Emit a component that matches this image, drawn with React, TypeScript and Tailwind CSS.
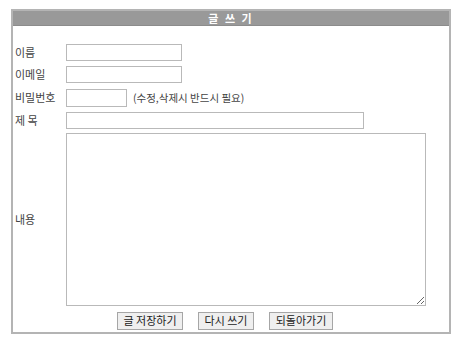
import React from 'react'

const font = { fontFamily: '"Noto Sans CJK KR", "Noto Sans", sans-serif' }

function Row({ label, children, className = '' }: { label: string; children: React.ReactNode; className?: string }) {
  return (
    <div className={`flex items-center ${className}`}>
      <div className="w-[53px] shrink-0 pl-[2px] text-[11px] text-[#444]">{label}</div>
      <div className="flex items-center">{children}</div>
    </div>
  )
}

export default function App() {
  return (
    <div className="bg-white w-[465px] h-[351px] pt-[9px] pl-[11px]" style={font}>
      <div className="w-[440px] h-[325px] border-2 border-[#b4b4b4] flex flex-col">
        <div className="h-[15px] bg-[#999999] border-b border-[#8c8c8c] text-white text-[11px] font-bold leading-[15px] text-center tracking-[2px]">
          글&nbsp;쓰&nbsp;기
        </div>

        <div className="pt-[15px] flex flex-col">
          <Row label="이름" className="h-[22px]">
            <input className="w-[116px] h-[17px] border border-[#b9b9b9] bg-white outline-none" />
          </Row>
          <Row label="이메일" className="h-[23px]">
            <input className="w-[116px] h-[17px] border border-[#b9b9b9] bg-white outline-none" />
          </Row>
          <Row label="비밀번호" className="h-[23px]">
            <input className="w-[61px] h-[18px] border border-[#b9b9b9] bg-white outline-none" />
            <span className="ml-[6px] text-[10.5px] text-[#444]">(수정,삭제시 반드시 필요)</span>
          </Row>
          <Row label="제 목" className="h-[23px]">
            <input className="w-[298px] h-[17px] border border-[#b9b9b9] bg-white outline-none" />
          </Row>
          <Row label="내용" className="h-[174px]">
            <textarea className="block w-[360px] h-[173px] border border-[#b9b9b9] bg-white outline-none" />
          </Row>
          <div className="flex items-center h-[25px] pl-[104px] gap-[15px] pt-[4px]">
            <button className="w-[66px] h-[18px] border border-[#a6a6a6] bg-[#efefef] text-[11px] text-[#222] leading-none">
              글 저장하기
            </button>
            <button className="w-[56px] h-[18px] border border-[#a6a6a6] bg-[#efefef] text-[11px] text-[#222] leading-none">
              다시 쓰기
            </button>
            <button className="w-[64px] h-[18px] border border-[#a6a6a6] bg-[#efefef] text-[11px] text-[#222] leading-none">
              되돌아가기
            </button>
          </div>
        </div>
      </div>
    </div>
  )
}
